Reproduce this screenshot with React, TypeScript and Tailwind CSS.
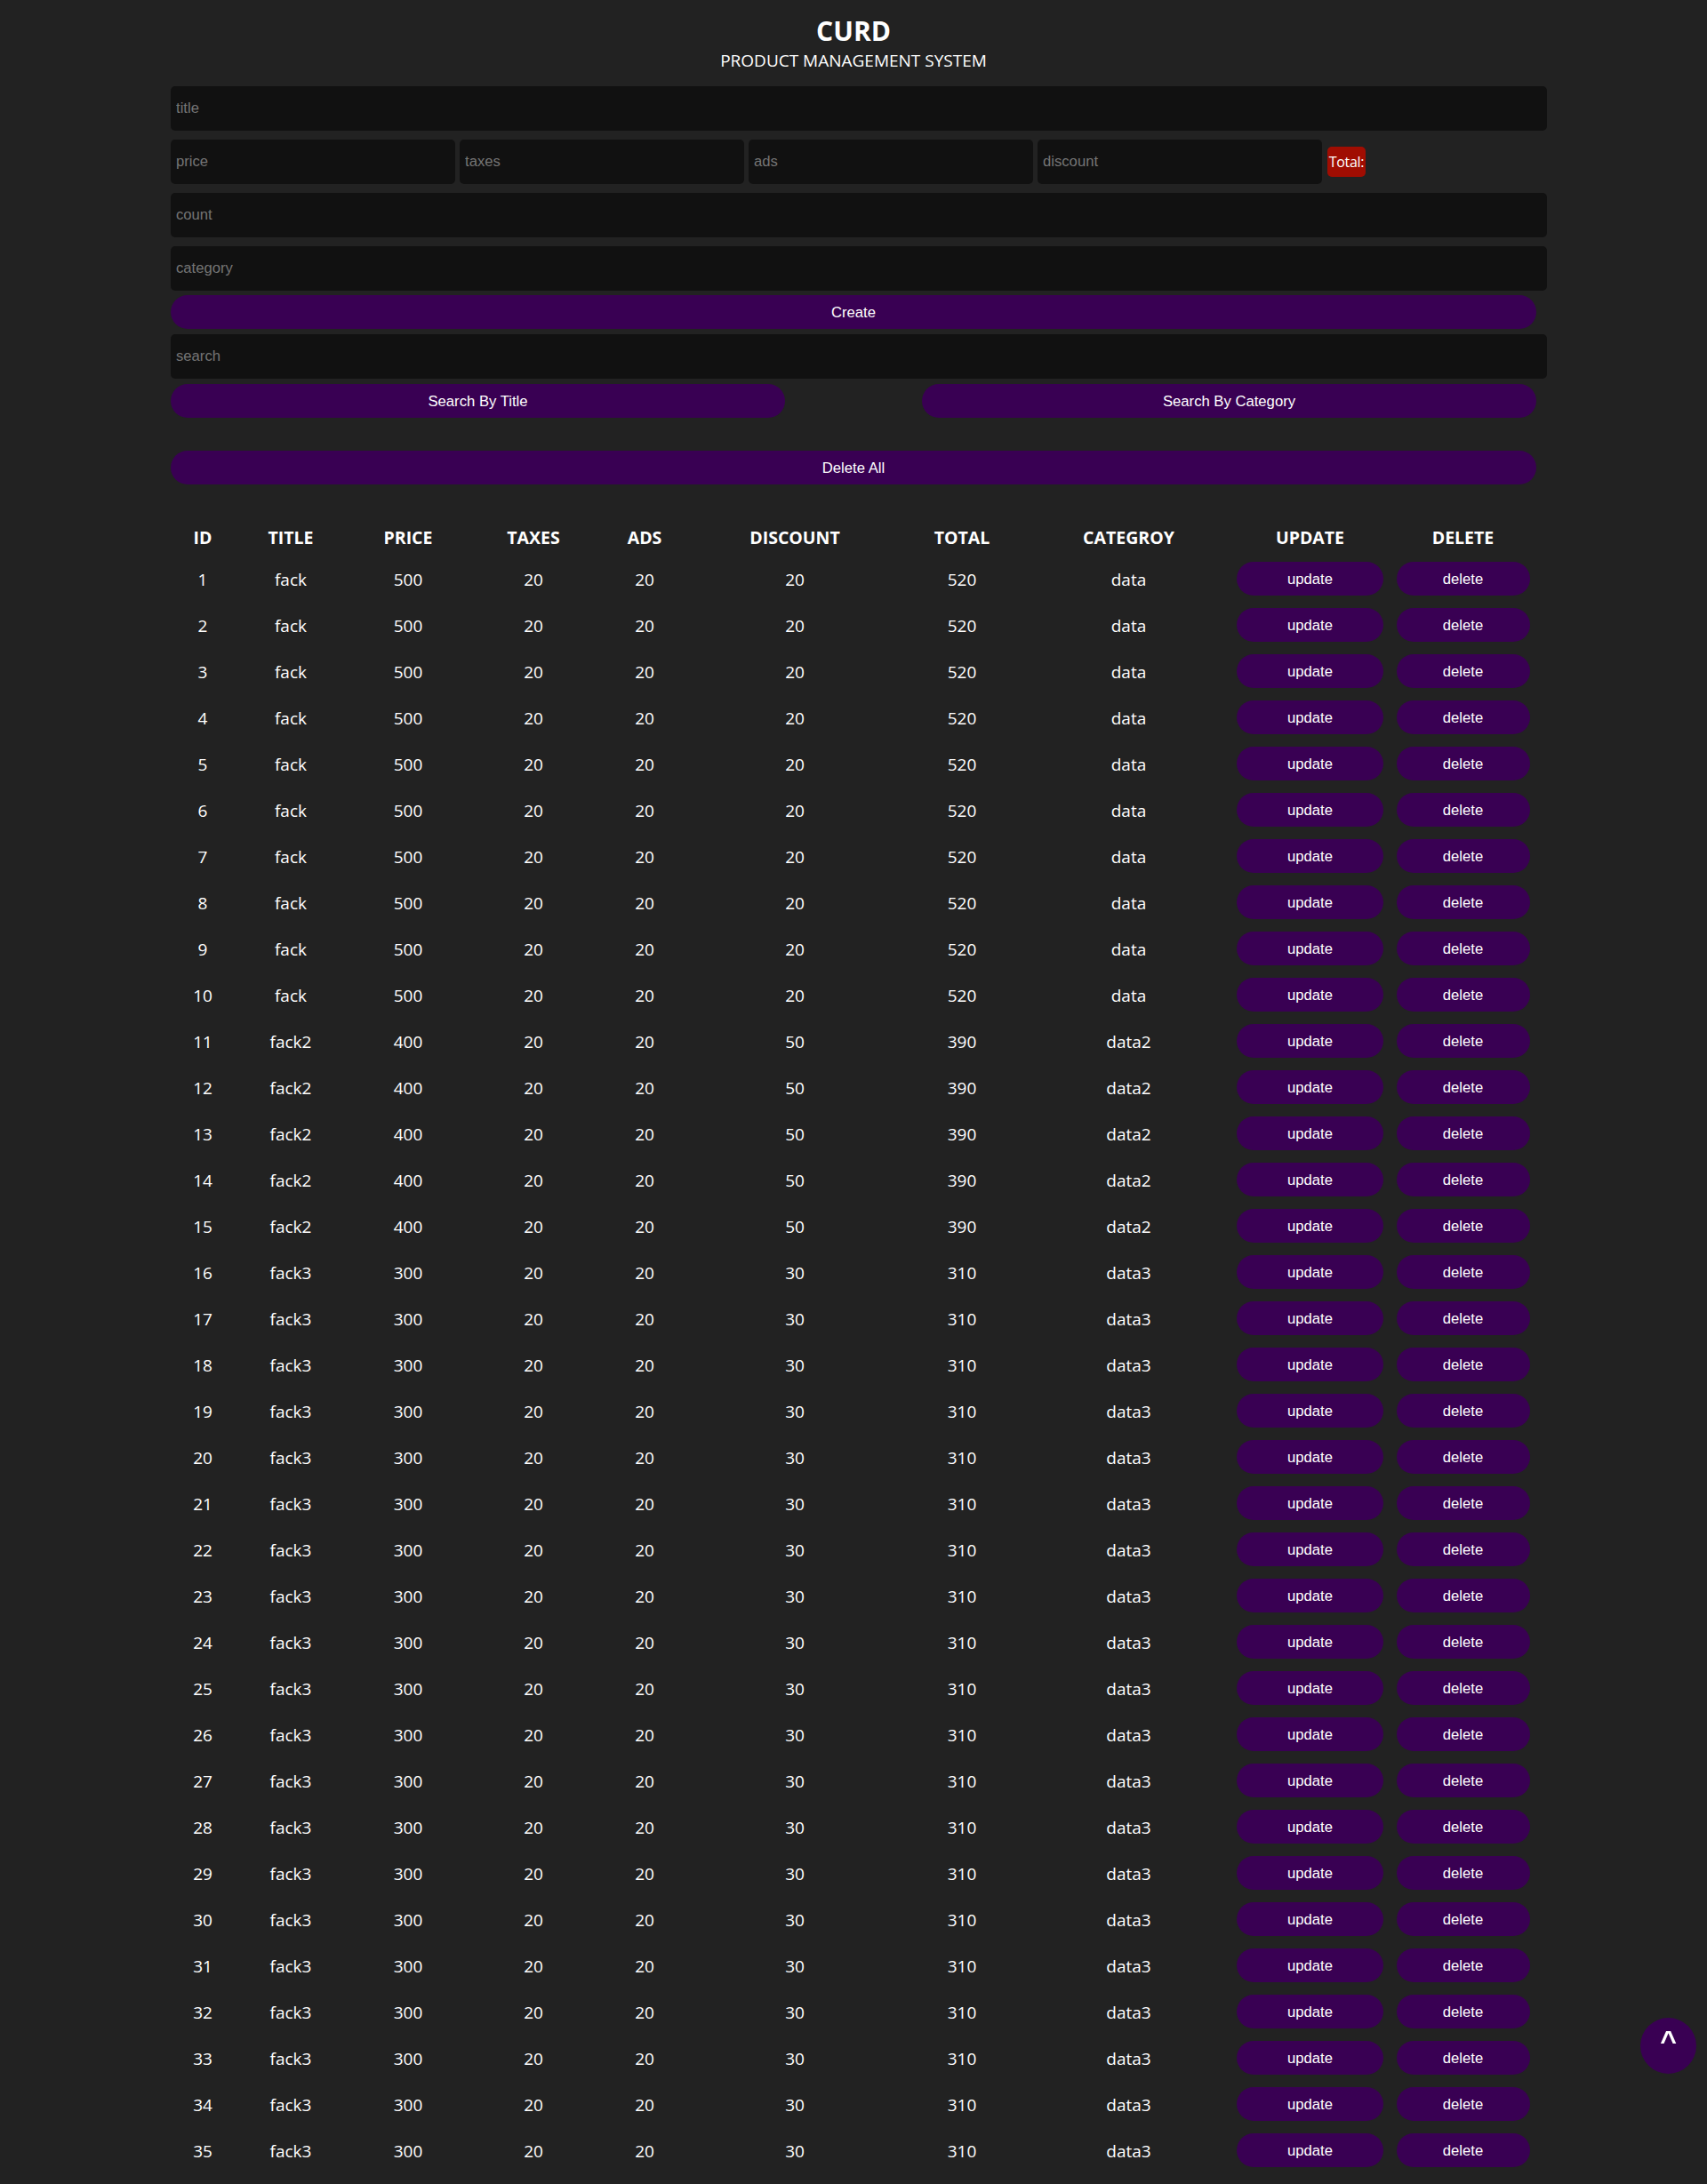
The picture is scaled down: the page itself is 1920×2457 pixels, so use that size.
import React from "react";

type Row = { id: number; title: string; price: number; taxes: number; ads: number; discount: number; total: number; category: string };

const rows: Row[] = [];
for (let i = 1; i <= 35; i++) {
  if (i <= 10) rows.push({ id: i, title: "fack", price: 500, taxes: 20, ads: 20, discount: 20, total: 520, category: "data" });
  else if (i <= 15) rows.push({ id: i, title: "fack2", price: 400, taxes: 20, ads: 20, discount: 50, total: 390, category: "data2" });
  else rows.push({ id: i, title: "fack3", price: 300, taxes: 20, ads: 20, discount: 30, total: 310, category: "data3" });
}

const inputCls =
  "h-[50px] rounded-[5px] bg-[#111] px-[6px] text-[16.67px] text-white outline-none placeholder:text-[#757575] [font-family:'Liberation_Sans',Arial,sans-serif]";
const btnCls =
  "h-[38px] rounded-[25px] bg-[#390053] text-[16.67px] text-white [font-family:'Liberation_Sans',Arial,sans-serif]";

const headers = ["ID", "TITLE", "PRICE", "TAXES", "ADS", "DISCOUNT", "TOTAL", "CATEGROY", "UPDATE", "DELETE"];
const widths = [72, 126, 138, 144, 106, 232, 144, 231, 177, 167];

export default function App() {
  return (
    <div className="min-h-[2457px] w-full bg-[#222] text-white [font-family:'Open_Sans',sans-serif]">
      <div className="mx-auto w-[1536px] pb-[12px]">
        <div className="flex flex-col items-center pt-[14px]">
          <h2 className="text-[30px] font-bold leading-[41px]">CURD</h2>
          <p className="text-[19px] leading-[27px]">PRODUCT MANAGEMENT SYSTEM</p>
        </div>
        <div className="mt-[15px] flex w-[1548px] flex-col gap-[10px]">
          <input className={inputCls + " w-full"} placeholder="title" />
          <div className="flex items-center gap-[5px]">
            <input className={inputCls + " w-[320px]"} placeholder="price" />
            <input className={inputCls + " w-[320px]"} placeholder="taxes" />
            <input className={inputCls + " w-[320px]"} placeholder="ads" />
            <input className={inputCls + " w-[320px]"} placeholder="discount" />
            <div className="ml-[1px] flex h-[34px] w-[43px] items-center justify-center overflow-visible whitespace-nowrap rounded-[5px] bg-[#a00d02] text-[16px] tracking-[-0.3px]">
              Total:
            </div>
          </div>
          <input className={inputCls + " w-full"} placeholder="count" />
          <input className={inputCls + " w-full"} placeholder="category" />
        </div>
        <button className={btnCls + " mt-[5px] w-full"}>Create</button>
        <input className={inputCls + " mt-[6px] w-[1548px]"} placeholder="search" />
        <div className="mt-[6px] flex justify-between">
          <button className={btnCls + " w-[691px]"}>Search By Title</button>
          <button className={btnCls + " w-[691px]"}>Search By Category</button>
        </div>
        <button className={btnCls + " mt-[37px] w-full"}>Delete All</button>
        <table className="mt-[40px] w-full table-fixed border-collapse text-center">
          <colgroup>
            {widths.map((w, i) => (
              <col key={i} style={{ width: w }} />
            ))}
          </colgroup>
          <thead>
            <tr className="h-[40px]">
              {headers.map((h) => (
                <th key={h} className="p-0 text-[19.5px] font-bold">
                  {h}
                </th>
              ))}
            </tr>
          </thead>
          <tbody>
            {rows.map((r) => (
              <tr key={r.id} className="h-[52px] text-[19px]">
                <td className="pt-[3px]">{r.id}</td>
                <td className="pt-[3px]">{r.title}</td>
                <td className="pt-[3px]">{r.price}</td>
                <td className="pt-[3px]">{r.taxes}</td>
                <td className="pt-[3px]">{r.ads}</td>
                <td className="pt-[3px]">{r.discount}</td>
                <td className="pt-[3px]">{r.total}</td>
                <td className="pt-[3px]">{r.category}</td>
                <td>
                  <div className="flex justify-center">
                    <button className={btnCls + " w-[165px]"}>update</button>
                  </div>
                </td>
                <td>
                  <div className="flex justify-center">
                    <button className={btnCls + " w-[150px]"}>delete</button>
                  </div>
                </td>
              </tr>
            ))}
          </tbody>
        </table>
      </div>
      <button className="fixed bottom-[124px] right-[12px] flex h-[63px] w-[63px] items-start justify-center rounded-full bg-[#390053] pt-[6px] text-[32px] font-bold leading-[40px] text-white [font-family:'Liberation_Sans',Arial,sans-serif]">
        ^
      </button>
    </div>
  );
}
